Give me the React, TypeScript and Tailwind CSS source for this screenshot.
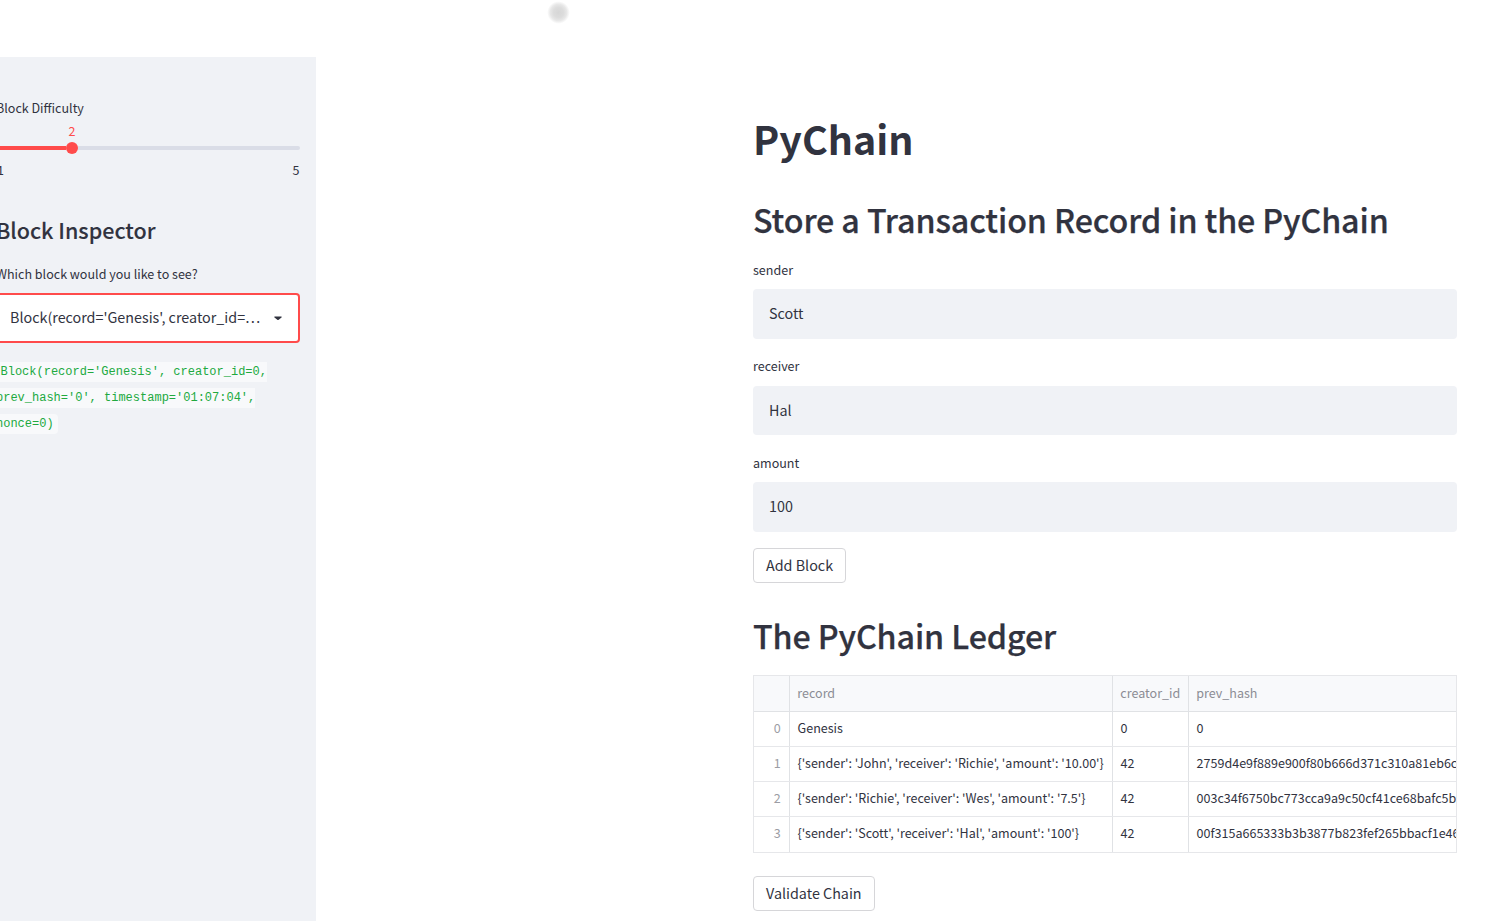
import type { ReactNode } from "react";

const FIELDS = [
  { label: "sender", value: "Scott" },
  { label: "receiver", value: "Hal" },
  { label: "amount", value: "100" },
];

const ROWS = [
  ["Genesis", "0", "0"],
  ["{'sender': 'John', 'receiver': 'Richie', 'amount': '10.00'}", "42", "2759d4e9f889e900f80b666d371c310a81eb6c"],
  ["{'sender': 'Richie', 'receiver': 'Wes', 'amount': '7.5'}", "42", "003c34f6750bc773cca9a9c50cf41ce68bafc5b"],
  ["{'sender': 'Scott', 'receiver': 'Hal', 'amount': '100'}", "42", "00f315a665333b3b3877b823fef265bbacf1e46"],
];

function Label({ children }: { children: ReactNode }) {
  return <div className="h-5 whitespace-nowrap text-[12.54px] leading-5">{children}</div>;
}

function Button({ children }: { children: ReactNode }) {
  return (
    <button className="flex items-center whitespace-nowrap rounded border border-[#d6d6d9] bg-white px-3 pb-[1.4px] text-[14.33px] leading-[32px]">
      {children}
    </button>
  );
}

function SectionTitle({ children }: { children: ReactNode }) {
  return (
    <h2 className="h-[43px] whitespace-nowrap text-[32.24px] font-medium leading-[43px] tracking-[-0.12px] [-webkit-text-stroke:0.25px_#31333f]">
      {children}
    </h2>
  );
}

function Sidebar() {
  return (
    <aside className="-ml-5 flex w-[336px] shrink-0 flex-col bg-[#f0f2f6] px-4 pt-[41px]">
      <Label>Block Difficulty</Label>
      <div className="mt-[4px] flex h-[18px] items-center pl-[72.4px] text-[12.54px] leading-[18px] text-[#ff4b4b]">
        <span>2</span>
      </div>
      <div className="mt-[2px] flex h-3 items-center">
        <div className="h-1 w-[70px] rounded-l bg-[#ff4b4b]" />
        <div className="h-3 w-3 shrink-0 rounded-full bg-[#ff4b4b]" />
        <div className="h-1 flex-1 rounded-r bg-[#dadde7]" />
      </div>
      <div className="mt-[6px] flex h-5 justify-between pl-[1px] pr-[0.6px] text-[12.54px] leading-5">
        <span>1</span>
        <span>5</span>
      </div>
      <h2 className="mt-[33px] h-[34px] whitespace-nowrap text-[21.5px] font-medium leading-[34px] [-webkit-text-stroke:0.1px_#31333f]">
        Block Inspector
      </h2>
      <div className="mt-[17px]">
        <Label>Which block would you like to see?</Label>
      </div>
      <div className="mt-[9px] flex h-[50px] items-center rounded border-2 border-[#ff4b4b] bg-white pl-[12px] pr-[16px]">
        <span className="flex-1 whitespace-nowrap pb-[2px] text-[14.33px] leading-[44px]">Block(record='Genesis', creator_id=…</span>
        <svg className="h-4 w-2" viewBox="0 0 8 16" fill="#31333f">
          <path d="M1 6.4h6c.8 0 .9.7.5 1.1L4.7 9.8c-.4.4-1 .4-1.4 0L.5 7.5C.1 7.1.2 6.4 1 6.4z" />
        </svg>
      </div>
      <p className="mt-[16px] font-['Liberation_Mono',monospace] text-[12px] leading-[26px] text-[#21a93f]">
        <code className="whitespace-pre rounded bg-[#f8f9fb] py-[3px] pl-[4.5px] pr-1 font-['Liberation_Mono',monospace]">
          {"Block(record='Genesis', creator_id=0,\nprev_hash='0', timestamp='01:07:04',\nnonce=0)"}
        </code>
      </p>
    </aside>
  );
}

function Ledger() {
  return (
    <div className="mt-[18px] h-[178px] w-[704px] overflow-hidden border border-[#e6e7ea] text-[12.54px]">
      <div className="grid h-9 grid-cols-[36px_323px_76px_267px] border-b border-[#e0e2e5] bg-[#f8f9fb] leading-[34px] text-[#8c8d95]">
        <div className="border-r border-[#e0e2e5]" />
        <div className="border-r border-[#e0e2e5] pl-[7.3px]">record</div>
        <div className="border-r border-[#e0e2e5] pl-[7.3px]">creator_id</div>
        <div className="pl-[7.3px]">prev_hash</div>
      </div>
      {ROWS.map((row, i) => (
        <div
          key={i}
          className="grid h-[35px] grid-cols-[36px_323px_76px_267px] whitespace-nowrap border-b border-[#e6e7ea] leading-8 last:h-[36px] last:border-b-0"
        >
          <div className="border-r border-[#e0e2e5] pr-[8.4px] text-right text-[#9c9da4]">{i}</div>
          <div className="border-r border-[#e0e2e5] pl-[7.6px]">{row[0]}</div>
          <div className="border-r border-[#e0e2e5] pl-[7.6px]">{row[1]}</div>
          <div className="overflow-hidden pl-[7.6px]">{row[2]}</div>
        </div>
      ))}
    </div>
  );
}

export default function App() {
  return (
    <div className="flex h-[921px] w-[1497px] flex-col overflow-hidden bg-white font-['Noto_Sans_CJK_SC',sans-serif] text-[#31333f]">
      <header className="h-[57px] shrink-0 pl-[547px] pt-[1px]">
        <div className="h-[23px] w-[23px] rounded-full bg-[radial-gradient(closest-side,#d6d6d6_0%,#dcdcdc_45%,#e8e8e8_72%,#ffffff_98%)]" />
      </header>
      <div className="flex flex-1">
        <Sidebar />
        <main className="ml-[437px] w-[704px] pt-[54px]">
          <h1 className="h-[53px] whitespace-nowrap text-[39.4px] font-bold leading-[53px]">PyChain</h1>
          <div className="mt-[34px]">
            <SectionTitle>Store a Transaction Record in the PyChain</SectionTitle>
          </div>
          <div className="mt-[19px] flex flex-col gap-[17.8px]">
            {FIELDS.map((f) => (
              <div key={f.label}>
                <Label>{f.label}</Label>
                <div className="mt-[9.1px] h-[49.6px] rounded bg-[#f0f2f6] pl-4 text-[14.33px] leading-[48.6px]">{f.value}</div>
              </div>
            ))}
          </div>
          <div className="mt-[16px] flex">
            <Button>Add Block</Button>
          </div>
          <div className="mt-[31px]">
            <SectionTitle>The PyChain Ledger</SectionTitle>
          </div>
          <Ledger />
          <div className="mt-[23px] flex">
            <Button>Validate Chain</Button>
          </div>
        </main>
      </div>
    </div>
  );
}
